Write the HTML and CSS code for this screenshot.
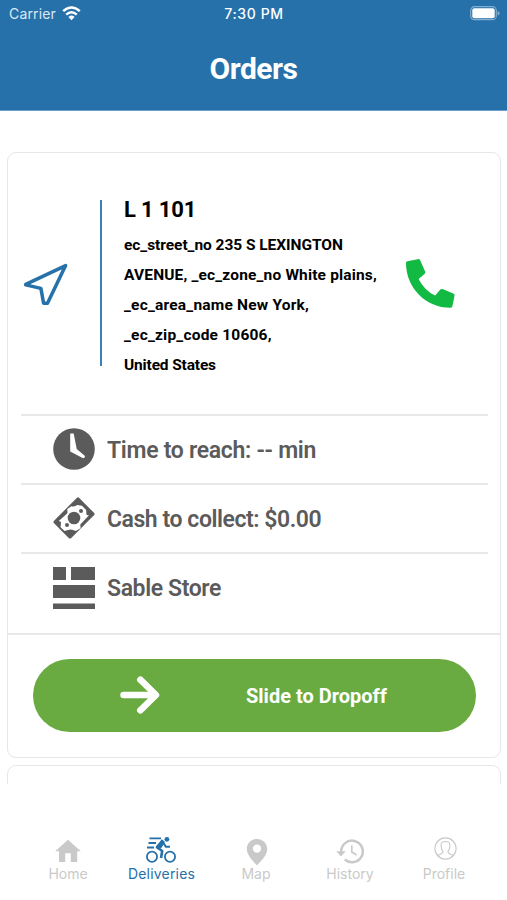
FILE: index.html
```html
<!DOCTYPE html>
<html lang="en">
<head>
<meta charset="utf-8">
<title>Orders</title>
<link rel="stylesheet" href="styles.css">
</head>
<body>
<div class="app">
  <header class="header">
    <div class="status">
      <div class="carrier"><span>Carrier</span>
        <svg width="19" height="15" viewBox="0 0 19 15"><g fill="none" stroke="#fff" stroke-width="2.5"><path d="M1.2 5.1Q9.5-2.2 17.8 5.1"/><path d="M4.2 8.6Q9.5 3.9 14.8 8.6"/></g><path d="M6.4 10.9Q9.5 8.2 12.6 10.9L9.5 14.2Z" fill="#fff"/></svg>
      </div>
      <time class="clock">7:30 PM</time>
      <svg class="battery" width="31" height="15" viewBox="0 0 31 15"><rect x=".7" y=".7" width="25.6" height="13" rx="3.8" fill="none" stroke="#83aed0" stroke-width="1.2"/><rect x="2.3" y="2.2" width="22.4" height="10" rx="2" fill="#fff"/><path d="M27.6 5Q29.6 5.4 29.6 7.2Q29.6 9 27.6 9.5Z" fill="#83aed0"/></svg>
    </div>
    <h1 class="title">Orders</h1>
  </header>
  <main class="orders">
    <article class="card">
      <section class="stop">
        <svg class="navigate" width="46" height="44" viewBox="0 0 46 44"><path d="M2.7 22.3L42.6 3.6L24.5 41.2H20.6L17.9 26.4L2.7 22.9Z" fill="none" stroke="#2671aa" stroke-width="3.5" stroke-linejoin="round"/></svg>
        <div class="divider"></div>
        <div class="address">
          <h2 class="name">L 1 101</h2>
          <p class="line street">ec_street_no 235 S LEXINGTON</p>
          <p class="line zone">AVENUE, _ec_zone_no White plains,</p>
          <p class="line area">_ec_area_name New York,</p>
          <p class="line zip">_ec_zip_code 10606,</p>
          <p class="line country">United States</p>
        </div>
        <svg class="call" width="50" height="50" viewBox="0 0 50 50"><path d="M2.4 2.2L12.7.2Q14.6-.2 15.3 1.5L20.1 12.6Q20.7 14 19.5 15L13.6 19.9Q19.4 31.4 30.2 36.6L35.1 30.7Q36.1 29.5 37.5 30.1L48.3 34.6Q49.8 35.3 49.5 36.8L47.4 47.2Q47 48.8 45.3 48.8C21 48.8 1 29 1 4Q1 2.5 2.4 2.2Z" fill="#12ba43"/></svg>
      </section>
      <ul class="details">
        <li class="detail"><svg width="42" height="42" viewBox="0 0 42 42"><circle cx="21" cy="21" r="20.8" fill="#5b5b5b"/><path d="M17.2 5.4H20.7L23.7 21L32 28Q32.2 30 30.1 30.2L17.2 23.5Z" fill="#fff"/></svg><span class="reach">Time to reach: -- min</span></li>
        <li class="detail"><svg width="42" height="42" viewBox="0 0 42 42"><path d="M24 .7Q25 0 26 .8L41.2 16.1Q42 17 41.2 18L18 41.2Q17 42 16 41.2L.8 26Q0 25 .8 24Z" fill="#5b5b5b"/><path d="M18.4 9.2Q22 10 24.2 8.1L29 8.8L33.2 12.9L33.4 17.5Q34.5 18.7 36.2 18L27.3 27.5L27.6 31.3L22.7 34.1Q18.4 31.7 15 33.1L11.5 34L7.6 30.2L8 25L5.8 24L14.4 16.2L14.3 12Z" fill="#fff"/><circle cx="21" cy="21" r="6.3" fill="#5b5b5b"/><circle cx="28" cy="14" r="2" fill="#5b5b5b"/><circle cx="14" cy="28" r="2" fill="#5b5b5b"/></svg><span class="cash">Cash to collect: $0.00</span></li>
        <li class="detail"><svg width="42" height="42" viewBox="0 0 42 42"><path d="M0 0H13V13H0ZM18 0H42V13H18ZM0 18H42V31H0ZM0 36.5H42V42H0Z" fill="#5b5b5b"/></svg><span class="store">Sable Store</span></li>
      </ul>
      <div class="action">
        <button class="slide"><svg width="40" height="38" viewBox="0 0 40 38"><path d="M3.5 19H35M20.3 3.7L36 19L20.3 34.3" fill="none" stroke="#fff" stroke-width="6.5" stroke-linecap="round" stroke-linejoin="round"/></svg><span>Slide to Dropoff</span></button>
      </div>
    </article>
    <article class="card next"></article>
  </main>
  <nav class="tabs">
    <a class="tab home"><svg width="26" height="24" viewBox="0 0 26 24"><path d="M13 .8L25.8 12.3H22.2V23H15.8V14.2H10.2V23H4V12.3H.2Z" fill="#c9c9c9"/></svg><span>Home</span></a>
    <a class="tab deliveries"><svg width="30" height="28" viewBox="0 0 30 28"><g fill="none" stroke="#2671aa"><circle cx="6" cy="20.8" r="5.1" stroke-width="1.8"/><circle cx="24" cy="20.8" r="5.1" stroke-width="1.8"/><path d="M3.5 2.4H15M2.5 7H10M1 11.5H8" stroke-width="1.8"/><path d="M17 5.5L11 11.3L16.2 15L15 22" stroke-width="2.6" stroke-linejoin="round"/><path d="M17.5 7L19.8 10.8H24" stroke-width="2"/></g><path d="M15.8 3.2L18.9 5.8L15.8 11.5L12 13.4L9.8 10.8Z" fill="#2671aa"/><circle cx="20.9" cy="3.3" r="2.4" fill="#2671aa"/></svg><span>Deliveries</span></a>
    <a class="tab map"><svg width="22" height="27" viewBox="0 0 22 27"><path fill-rule="evenodd" d="M11 0C5.3 0 .8 4.3.8 10C.8 16.8 8.6 23.4 11 26.5C13.4 23.4 21.2 16.8 21.2 10C21.2 4.3 16.7 0 11 0ZM11 5.4A4.2 4.2 0 1 1 11 13.8A4.2 4.2 0 1 1 11 5.4Z" fill="#c9c9c9"/></svg><span>Map</span></a>
    <a class="tab history"><svg width="28" height="25" viewBox="0 0 28 25"><path d="M5.2 12.8A10.8 10.8 0 1 1 8.8 20.5" fill="none" stroke="#c9c9c9" stroke-width="2.5"/><path d="M.3 12.3H9.7L5 17.5Z" fill="#c9c9c9"/><path d="M15.8 6.6V13L20.6 16" fill="none" stroke="#c9c9c9" stroke-width="1.6"/></svg><span>History</span></a>
    <a class="tab profile"><svg width="23" height="23" viewBox="0 0 23 23"><g fill="none" stroke="#c9c9c9" stroke-width="1.1"><circle cx="11.5" cy="11.5" r="10.6"/><path d="M3.7 18.6C5.5 16.9 9.3 17 9.2 14.6C6.8 12 7 8.7 7.2 7C7.6 3.7 15.4 3.7 15.8 7C16 8.7 16.2 12 13.8 14.6C13.7 17 17.5 16.9 19.3 18.6"/></g></svg><span>Profile</span></a>
  </nav>
</div>
</body>
</html>
```
FILE: styles.css
```css
* { box-sizing: border-box; }
body { margin: 0; background: #fff; font-family: Roboto, "Liberation Sans", sans-serif; }
h1, h2, p, ul { margin: 0; padding: 0; }
svg { display: block; flex: none; }
.app { width: 507px; height: 900px; display: flex; flex-direction: column; overflow: hidden; }
.header { height: 111px; background: #2671aa; color: #fff; border-bottom: 1px solid #68a0cb; flex: none; }
.status { height: 28px; display: grid; grid-template-columns: 1fr auto 1fr; align-items: center; padding: 0 6px 0 9px; font-family: Inter, sans-serif; font-size: 14px; line-height: 28px; }
.carrier { display: flex; gap: 6px; align-items: center; color: #dce9f3; letter-spacing: .15px; }
.carrier svg { margin-top: -2px; }
.clock { font-weight: 500; letter-spacing: .6px; margin-right: 2px; }
.battery { justify-self: end; margin-top: -1px; }
.title { font-size: 30px; line-height: 36px; text-align: center; padding-top: 23px; font-weight: 700; letter-spacing: -.5px; }
.orders { height: 672.5px; padding: 41px 6px 0 7px; overflow: hidden; flex: none; }
.card { height: 606px; border: 1px solid #e7e7e7; border-radius: 9px; }
.next { margin-top: 7px; }
.stop { height: 260.5px; display: grid; grid-template-columns: 76px 2px 1fr 80px; align-items: center; padding: 0 15px 0 16px; }
.navigate, .call { margin-top: 2px; }
.navigate { margin-left: -1px; }
.divider { width: 2px; height: 166px; background: #3b80b5; }
.address { padding-left: 22px; color: #000; white-space: nowrap; padding-top: 7px; }
.name { font-size: 22px; line-height: 38px; letter-spacing: -.15px; padding-bottom: 2px; margin-top: -1px; }
.line { font-size: 15.5px; line-height: 29.9px; font-weight: 700; }
.street { letter-spacing: -.05px; }
.zone { letter-spacing: .16px; }
.area { letter-spacing: .2px; }
.zip { letter-spacing: .2px; }
.country { letter-spacing: -.15px; }
.details { height: 219.5px; list-style: none; padding: 0 12px 0 13px; }
.detail { height: 69.3px; border-top: 2px solid #e8e8e8; display: flex; align-items: center; gap: 12px; padding-left: 32px; font-size: 23px; font-weight: 600; color: #5b5b5b; }
.detail span { padding-top: 2px; }
.reach { letter-spacing: -.3px; }
.cash { letter-spacing: -.45px; }
.store { letter-spacing: -.4px; }
.action { border-top: 2px solid #e8e8e8; padding: 23.5px 24px 23.5px 25px; }
.slide { width: 442.5px; height: 73.5px; border: 0; border-radius: 37px; background: #69ab40; color: #fff; display: flex; align-items: center; padding: 0 0 0 87px; gap: 86px; font: 700 20px Roboto, sans-serif; }
.slide span { padding-top: 2px; }
.tabs { flex: 1; display: grid; grid-template-columns: repeat(5, 94px); padding: 50.5px 0 0 21px; font-family: Inter, sans-serif; font-size: 14px; line-height: 18px; color: #c9c9c9; }
.tab { display: flex; flex-direction: column; align-items: center; height: 49px; justify-content: flex-end; }
.tab svg { margin-bottom: 2px; }
.tab.map svg { margin-bottom: -1px; margin-left: 1px; }
.tab.history svg { margin-bottom: 1px; }
.tab.profile svg { margin-bottom: 5px; margin-left: 2px; }
.deliveries { color: #2671aa; }
.tab.deliveries svg { margin-bottom: 1px; margin-left: -2px; }
.deliveries span { letter-spacing: .2px; margin-left: -1px; }
```
